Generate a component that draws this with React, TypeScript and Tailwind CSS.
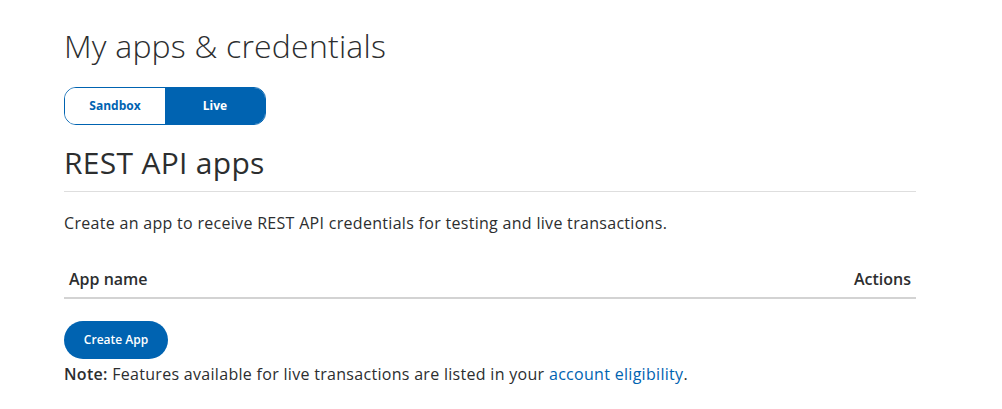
import { useState } from "react"

function App() {
  const [env, setEnv] = useState<"sandbox" | "live">("live")

  return (
    <div className="min-h-screen bg-white font-['Open_Sans',sans-serif] text-[#2c2e2f]">
      <div className="w-[852px] ml-16 pt-[26px]">
        {/* Titulo */}
        <h1 className="text-[32px] font-light leading-[40px] tracking-[0.2px]">My apps &amp; credentials</h1>

        {/* Toggle */}
        <div className="mt-[21px] flex w-[202px] h-[38px] rounded-[12px] border border-[#0063b1] overflow-hidden">
          <button
            onClick={() => setEnv("sandbox")}
            className={`w-[100px] text-[12px] font-bold ${env === "sandbox" ? "bg-[#0063b1] text-white" : "bg-white text-[#0063b1]"}`}
          >
            Sandbox
          </button>
          <button
            onClick={() => setEnv("live")}
            className={`flex-1 text-[12px] font-bold ${env === "live" ? "bg-[#0063b1] text-white" : "bg-white text-[#0063b1]"}`}
          >
            Live
          </button>
        </div>

        {/* REST API */}
        <h2 className="mt-[20px] text-[30px] leading-[36px] font-normal tracking-[0.3px]">REST API apps</h2>
        <div className="mt-[10px] border-t border-[#dedede]" />

        <p className="mt-[19px] text-[16px] leading-[24px] tracking-[0.3px] text-[#2c2e2f]">
          Create an app to receive REST API credentials for testing and live transactions.
        </p>

        {/* Tabela */}
        <div className="mt-[32px] flex justify-between px-[5px] pb-[6px] border-b-2 border-[#d3d3d3] text-[16px] leading-[24px] font-semibold">
          <span>App name</span>
          <span>Actions</span>
        </div>

        <button className="mt-[22px] h-[38px] w-[104px] rounded-full bg-[#0063b1] text-white text-[12px] font-semibold">
          Create App
        </button>

        <p className="mt-[3px] text-[16px] leading-[24px] tracking-[0.3px]">
          <span className="font-semibold">Note:</span> Features available for live transactions are listed in your{" "}
          <a className="text-[#0063b1]">account eligibility</a>.
        </p>
      </div>
    </div>
  )
}

export default App
